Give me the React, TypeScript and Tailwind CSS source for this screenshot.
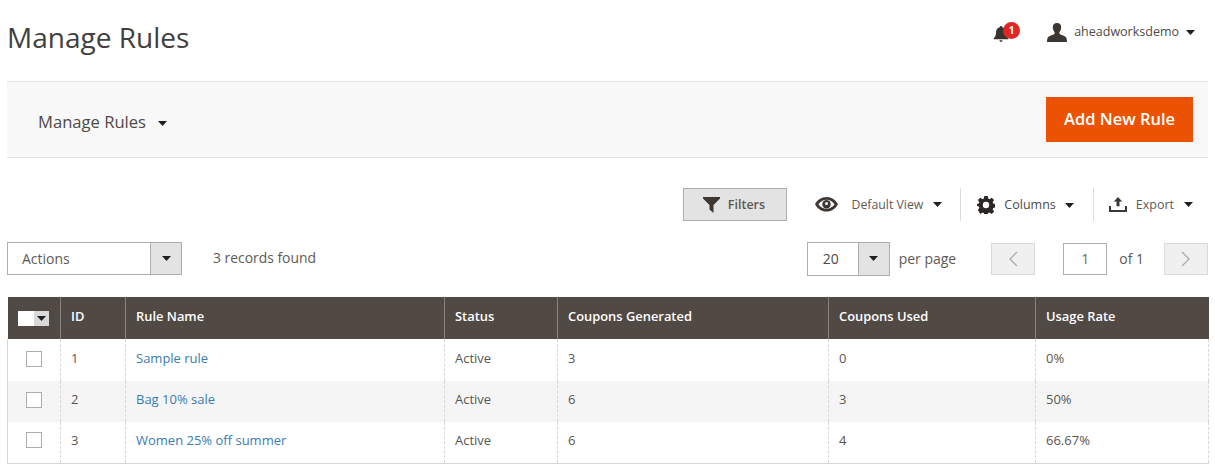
const F = "font-['Open_Sans',sans-serif]";

function Caret({ className = "" }: { className?: string }) {
  return (
    <svg width="9" height="5" viewBox="0 0 9 5" className={className}>
      <path d="M0 0h9L4.5 5z" fill="#1f1f1f" />
    </svg>
  );
}

function Bell() {
  return (
    <svg width="16" height="18" viewBox="0 0 16 18">
      <path d="M8 1c.8 0 1.300.6 1.300 1.300C12 3 13 5.200 13 8c0 2.600.8 3.800 2.300 5.200v1H.7v-1C2.200 11.800 3 10.600 3 8c0-2.800 1-5 3.700-5.700C6.700 1.600 7.200 1 8 1z" fill="#373330" />
      <path d="M6.500 15.200h3c0 .9-.6 1.600-1.500 1.600s-1.500-.7-1.500-1.600z" fill="#373330" />
    </svg>
  );
}

function User() {
  return (
    <svg width="20" height="19" viewBox="0 0 20 19">
      <path d="M10 0c2.900 0 4.200 1.700 4.200 4.200 0 1.900-.7 3.500-1.500 4.600-.6.8-.5 2 .4 2.500 1.900 1.100 5.600 1.700 6.300 3.600.4 1 .6 2.600.6 4.100H0c0-1.500.2-3.100.6-4.100.7-1.900 4.400-2.500 6.300-3.600.9-.5 1-1.700.4-2.500C6.500 7.700 5.800 6.100 5.800 4.200 5.800 1.700 7.100 0 10 0z" fill="#3d3733" />
    </svg>
  );
}

function Funnel() {
  return (
    <svg width="17" height="16" viewBox="0 0 17 16">
      <path d="M0 0h17v1.500L10.500 8v8L6.500 12.500V8L0 1.500z" fill="#3d3733" />
    </svg>
  );
}

function Eye() {
  return (
    <svg width="23" height="15" viewBox="0 0 23 15">
      <path fillRule="evenodd" d="M11.500 0C16.500 0 20.700 3 23 7.200 20.700 11.600 16.500 14.500 11.500 14.500S2.300 11.600 0 7.200C2.300 3 6.500 0 11.500 0zm0 2.700C8.300 2.700 5.300 4.500 3.400 7.200c1.900 2.800 4.900 4.600 8.100 4.600s6.200-1.800 8.100-4.600c-1.900-2.700-4.900-4.500-8.100-4.500z" fill="#3d3733" />
      <circle cx="11.500" cy="7.200" r="4.200" fill="#3d3733" />
      <circle cx="11.500" cy="6.500" r="1.500" fill="#fff" />
    </svg>
  );
}

function Gear() {
  return (
    <svg width="18" height="18" viewBox="0 0 18 18">
      <path fillRule="evenodd" d="M7.300 0h3.400l.5 2.600 1.300.6L14.700 1.700l2.400 2.400-1.500 2.200.6 1.300 1.800.5v3.400l-1.800.5-.6 1.300 1.500 2.200-2.400 2.400-2.200-1.500-1.300.6-.5 2H7.300l-.5-2-1.300-.6-2.200 1.500L.9 13.900l1.500-2.200-.6-1.300L0 9.900V8.100l1.800-.5.600-1.300L.9 4.100l2.400-2.400 2.200 1.500 1.300-.6zM9 5.800a3.200 3.200 0 1 0 0 6.400 3.200 3.200 0 0 0 0-6.400z" fill="#2b2724" />
    </svg>
  );
}

function Upload() {
  return (
    <svg width="18" height="15" viewBox="0 0 18 15">
      <path d="M9 0l4.200 4.400h-2.700v4.800h-3V4.400H4.800z" fill="#3d3733" />
      <path d="M0 9h2v4h14V9h2v6H0z" fill="#3d3733" />
    </svg>
  );
}

function Chevron({ dir }: { dir: "l" | "r" }) {
  return (
    <svg width="10" height="16" viewBox="0 0 10 16">
      <path d={dir === "l" ? "M9 1L2 8l7 7" : "M1 1l7 7-7 7"} fill="none" stroke="#adadad" strokeWidth="1.400" />
    </svg>
  );
}

const rows = [
  { id: "1", name: "Sample rule", gen: "3", used: "0", rate: "0%", bg: "bg-white", h: "h-[42px]", tp: "pb-[2px]", cp: "pb-[2px]" },
  { id: "2", name: "Bag 10% sale", gen: "6", used: "3", rate: "50%", bg: "bg-[#f5f5f5]", h: "h-[41px]", tp: "pb-[4px]", cp: "pb-[4px]" },
  { id: "3", name: "Women 25% off summer", gen: "6", used: "4", rate: "66.67%", bg: "bg-white", h: "h-[41px]", tp: "pb-[4px]", cp: "pb-[4px]" },
];

const th = "border-l border-[#8a837f] px-[10px] pb-[2px] text-left text-[12.900px] font-semibold text-white h-[42px] align-middle";
const td = "border-l border-dashed border-[#d6d6d6] px-[10px] text-[13px] align-middle";
const plain = "text-[#5a5551]";

export default function App() {
  return (
    <div className={`${F} w-[1215px] h-[475px] bg-white overflow-hidden px-[7px] text-[#41362f]`}>
      <header className="flex h-[81px] items-start justify-between">
        <h1 className="mt-[18px] text-[28px] leading-[38px] font-normal text-[#41403d]">Manage Rules</h1>
        <div className="flex items-center mt-[22px] mr-[13px]">
          <div className="relative mr-[26px] h-[20px] w-[28px]">
            <div className="absolute left-0 top-[3px]"><Bell /></div>
            <span className="absolute left-[10px] top-0 flex h-[17px] w-[17px] items-center justify-center rounded-full bg-[#e22626] text-[10px] font-bold text-white">1</span>
          </div>
          <User />
          <span className="ml-[7px] text-[12.500px] text-[#4f4a46]">aheadworksdemo</span>
          <Caret className="ml-[7px]" />
        </div>
      </header>

      <section className="flex h-[77px] items-center justify-between border-y border-[#e3e3e3] bg-[#f8f8f8]">
        <div className="ml-[31px] mt-[6px] flex items-center text-[16.600px] text-[#4e4a46]">
          <span>Manage Rules</span>
          <Caret className="ml-[12px] mt-[2px]" />
        </div>
        <button className="mr-[15px] mb-[1px] h-[45px] w-[147px] bg-[#eb5202] text-[16.500px] font-semibold text-white">Add New Rule</button>
      </section>

      <section className="flex items-center justify-end mt-[30px] h-[33px] pr-[15px]">
        <button className="flex h-[33px] w-[104px] items-center justify-center gap-[8px] border border-[#adadad] bg-[#e3e3e3] pr-[3px] text-[12.500px] font-semibold text-[#5e5650]">
          <Funnel />
          <span className="pt-[1px]">Filters</span>
        </button>
        <div className="ml-[28px] flex items-center h-[33px]">
          <Eye />
          <span className="ml-[13px] pt-[1px] text-[12.300px] text-[#5e5a56]">Default View</span>
          <Caret className="ml-[10px]" />
        </div>
        <div className="ml-[18px] flex h-[33px] items-center border-l border-[#dcdcdc] pl-[16px]">
          <Gear />
          <span className="ml-[9px] pt-[1px] text-[12.500px] text-[#4f4a46]">Columns</span>
          <Caret className="ml-[9px] mt-[1px]" />
        </div>
        <div className="ml-[19px] flex h-[33px] items-center border-l border-[#dcdcdc] pl-[15px]">
          <Upload />
          <span className="ml-[9px] pt-[1px] text-[12.500px] text-[#5e5a56]">Export</span>
          <Caret className="ml-[10px]" />
        </div>
      </section>

      <section className="mt-[21px] flex h-[33px] items-center">
        <div className="flex h-[33px] w-[175px] border border-[#adadad]">
          <span className="flex-1 pl-[14px] text-[14px] leading-[31px] text-[#5e5a56]">Actions</span>
          <span className="flex w-[31px] items-center justify-center border-l border-[#adadad] bg-[#e3e3e3]"><Caret /></span>
        </div>
        <span className="ml-[31px] text-[13.900px] text-[#5e5a56]">3 records found</span>
        <div className="ml-auto flex h-[33px] items-center">
          <div className="flex h-[34px] w-[83px] border border-[#adadad]">
            <span className="flex-1 pl-[15px] text-[14px] leading-[32px] text-[#4f4a46]">20</span>
            <span className="flex w-[31px] items-center justify-center border-l border-[#adadad] bg-[#e3e3e3]"><Caret /></span>
          </div>
          <span className="ml-[9px] text-[14px] text-[#5e5a56]">per page</span>
          <span className="ml-[35px] flex h-[32px] w-[44px] items-center justify-center border border-[#d9d9d9] bg-[#f0f0f0]"><Chevron dir="l" /></span>
          <span className="ml-[28px] flex h-[32px] w-[44px] items-center justify-center border border-[#adadad] text-[14px] text-[#6b6b6b]">1</span>
          <span className="ml-[12px] text-[14px] text-[#5e5a56]">of 1</span>
          <span className="ml-[20px] flex h-[32px] w-[44px] items-center justify-center border border-[#d9d9d9] bg-[#f0f0f0]"><Chevron dir="r" /></span>
        </div>
      </section>

      <table className="mt-[22px] w-[1201px] table-fixed border-collapse border-b border-[#d6d6d6]">
        <colgroup>
          <col className="w-[53px]" />
          <col className="w-[65px]" />
          <col className="w-[319px]" />
          <col className="w-[113px]" />
          <col className="w-[271px]" />
          <col className="w-[207px]" />
          <col className="w-[173px]" />
        </colgroup>
        <thead>
          <tr className="bg-[#514943]">
            <th className="h-[42px] border-[#514943] align-middle">
              <div className="ml-[10px] flex h-[15px] w-[31px]">
                <span className="w-[16px] bg-white" />
                <span className="flex w-[15px] items-center justify-center bg-[#d9d9d9]"><Caret /></span>
              </div>
            </th>
            <th className={th}>ID</th>
            <th className={th}>Rule Name</th>
            <th className={th}>Status</th>
            <th className={th}>Coupons Generated</th>
            <th className={th}>Coupons Used</th>
            <th className={th}>Usage Rate</th>
          </tr>
        </thead>
        <tbody>
          {rows.map((r) => (
            <tr key={r.id} className={`${r.bg} ${r.h}`}>
              <td className={`border-l border-[#d6d6d6] align-middle ${r.cp}`}>
                <span className="ml-[18px] block h-[16px] w-[16px] border border-[#adadad] bg-white" />
              </td>
              <td className={`${td} ${r.tp} ${plain}`}>{r.id}</td>
              <td className={`${td} ${r.tp} text-[#3a7bb0]`}>{r.name}</td>
              <td className={`${td} ${r.tp} ${plain}`}>Active</td>
              <td className={`${td} ${r.tp} ${plain}`}>{r.gen}</td>
              <td className={`${td} ${r.tp} ${plain}`}>{r.used}</td>
              <td className={`${td} ${r.tp} ${plain} border-r border-r-[#d6d6d6]`}>{r.rate}</td>
            </tr>
          ))}
        </tbody>
      </table>
    </div>
  );
}
